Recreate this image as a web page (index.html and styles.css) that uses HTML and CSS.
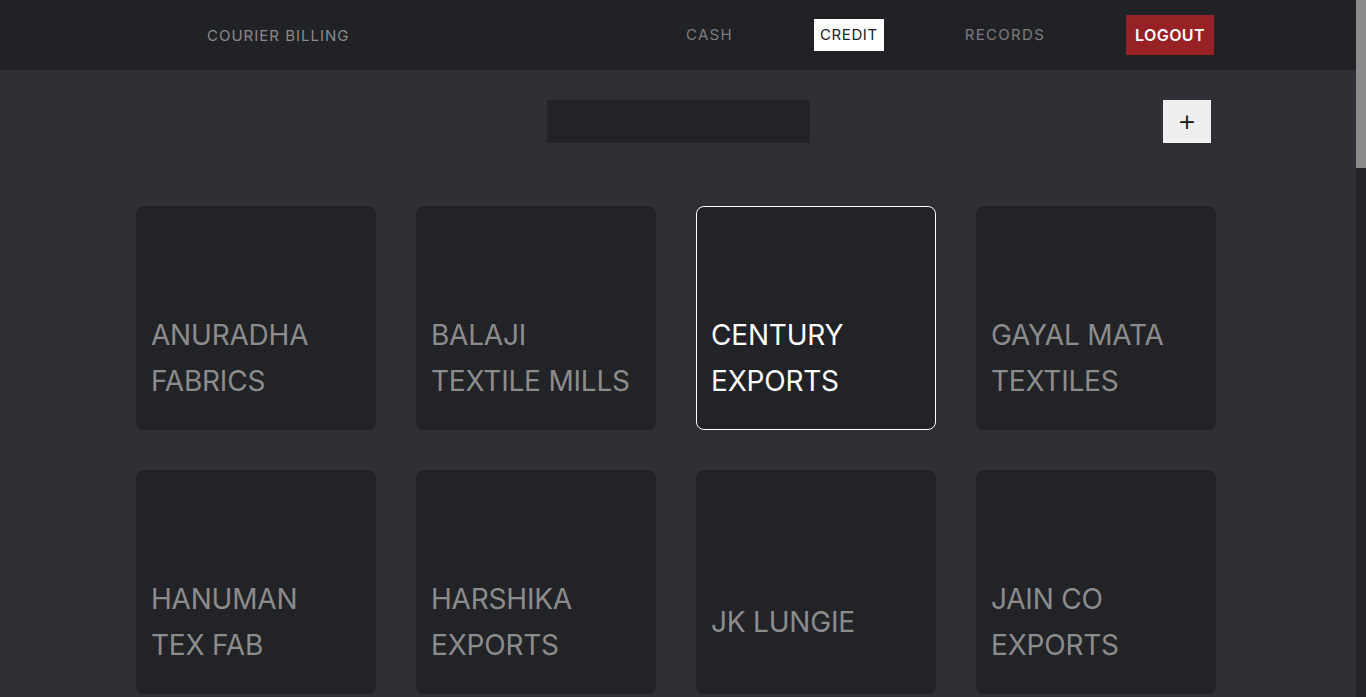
FILE: index.html
```html
<!DOCTYPE html>
<html lang="en">
<head>
<meta charset="utf-8">
<title>Courier Billing</title>
<link rel="stylesheet" href="styles.css">
</head>
<body>
<div class="page">
<nav class="nav">
  <a class="brand" href="#">COURIER BILLING</a>
  <ul class="links">
    <li><a class="link" href="#">CASH</a></li>
    <li><a class="link active" href="#">CREDIT</a></li>
    <li><a class="link" href="#">RECORDS</a></li>
    <li><a class="logout" href="#">LOGOUT</a></li>
  </ul>
</nav>
<main>
  <div class="toolbar">
    <input class="search" type="text" aria-label="Search">
    <button class="add" type="button">+</button>
  </div>
  <div class="grid">
    <div class="card"><span>ANURADHA FABRICS</span></div>
    <div class="card"><span>BALAJI TEXTILE MILLS</span></div>
    <div class="card selected"><span>CENTURY EXPORTS</span></div>
    <div class="card"><span>GAYAL MATA TEXTILES</span></div>
    <div class="card"><span>HANUMAN TEX FAB</span></div>
    <div class="card"><span>HARSHIKA EXPORTS</span></div>
    <div class="card"><span>JK LUNGIE</span></div>
    <div class="card"><span>JAIN CO EXPORTS</span></div>
    <div class="card"><span>KALPANA SAREES</span></div>
    <div class="card"><span>KRISHNA SYNTHETICS</span></div>
    <div class="card"><span>LAXMI TEXTILES</span></div>
    <div class="card"><span>MAHAVIR FABRICS</span></div>
    <div class="card"><span>MAHESH TRADERS</span></div>
    <div class="card"><span>MANGALAM SILKS</span></div>
    <div class="card"><span>NAVKAR CREATION</span></div>
    <div class="card"><span>OM SAI TEXTILES</span></div>
    <div class="card"><span>PADMAVATI FASHION</span></div>
    <div class="card"><span>PARAS SAREES</span></div>
    <div class="card"><span>PRAGATI EXPORTS</span></div>
    <div class="card"><span>RADHE KRISHNA FAB</span></div>
    <div class="card"><span>RAJ LAXMI SILK</span></div>
    <div class="card"><span>RAMDEV TEXTILES</span></div>
    <div class="card"><span>RIDDHI SIDDHI</span></div>
    <div class="card"><span>SAI BABA FABRICS</span></div>
    <div class="card"><span>SANGAM TEXTILES</span></div>
    <div class="card"><span>SHIV SHAKTI MILLS</span></div>
    <div class="card"><span>SHREE GANESH TEX</span></div>
    <div class="card"><span>SHREE JI FASHION</span></div>
    <div class="card"><span>SHYAM SILK MILLS</span></div>
    <div class="card"><span>SIDDHARTH FABRICS</span></div>
    <div class="card"><span>SURYA TEXTILES</span></div>
    <div class="card"><span>TIRUPATI EXPORTS</span></div>
    <div class="card"><span>UMA SAREES</span></div>
    <div class="card"><span>VARDHMAN TEX</span></div>
    <div class="card"><span>VIJAY TEXTILES</span></div>
    <div class="card"><span>VINAYAK FABRICS</span></div>
    <div class="card"><span>VISHAL SYNTHETICS</span></div>
    <div class="card"><span>YASH EXPORTS</span></div>
    <div class="card"><span>ZENITH FABRICS</span></div>
    <div class="card"><span>ZOYA EXPORTS</span></div>
  </div>
</main>
</div>
<div class="rail" aria-hidden="true"><div class="thumb"></div></div>
</body>
</html>
```
FILE: styles.css
```css
html,
body {
  margin: 0;
  height: 100%;
  overflow: hidden;
  background: #2f3036;
}
body {
  display: flex;
  font-family: "Inter", "Open Sans", sans-serif;
}
.page {
  flex: 1;
  min-width: 0;
  height: 100vh;
  overflow-y: auto;
  scrollbar-width: none;
  background: #2f3036;
}
.page::-webkit-scrollbar {
  display: none;
}
.rail {
  width: 10px;
  flex: none;
  background: #222327;
}
.thumb {
  height: 168px;
  background: #8b8b8b;
}
a {
  text-decoration: none;
}
.nav {
  height: 70px;
  background: #212226;
  display: flex;
  align-items: center;
  justify-content: space-between;
  padding: 0 142px 0 207px;
}
.brand {
  color: #8a8a8a;
  font-size: 15px;
  letter-spacing: 1px;
}
.links {
  list-style: none;
  margin: 0;
  padding: 0;
  display: flex;
  align-items: center;
  gap: 75px;
}
.link {
  display: block;
  padding: 0 6px;
  height: 32px;
  line-height: 32px;
  color: #7d7d7d;
  font-size: 15px;
  letter-spacing: 1.3px;
}
.link.active {
  background: #ffffff;
  color: #222327;
  letter-spacing: 0.6px;
}
.logout {
  display: block;
  background: #962226;
  color: #ffffff;
  font-size: 16px;
  font-weight: 600;
  letter-spacing: 0.4px;
  height: 40px;
  line-height: 40px;
  padding: 0 9px;
}
.toolbar {
  display: grid;
  grid-template-columns: 1fr 263px 1fr;
  align-items: center;
  margin-top: 30px;
  padding: 0 145px;
}
.search {
  grid-column: 2;
  height: 43px;
  box-sizing: border-box;
  border: none;
  background: #222327;
  color: #ccc;
  outline: none;
}
.add {
  grid-column: 3;
  justify-self: end;
  width: 48px;
  height: 43px;
  border: none;
  background: #efefef;
  color: #111;
  font-size: 22px;
  font-family: "DejaVu Sans", sans-serif;
  padding: 0;
}
.grid {
  width: 1084px;
  margin: 63px auto 0;
  padding-bottom: 86px;
  display: grid;
  grid-template-columns: repeat(4, 240px);
  gap: 40px;
}
.card {
  height: 224px;
  box-sizing: border-box;
  background: #222327;
  border-radius: 8px;
  padding: 80px 24px 0 15px;
  display: flex;
  align-items: center;
  color: #8c8c8c;
  font-size: 28px;
  line-height: 46px;
  letter-spacing: -0.2px;
}
.card.selected {
  border: 1px solid #ffffff;
  padding: 79px 23px 0 14px;
  color: #ffffff;
}
```
